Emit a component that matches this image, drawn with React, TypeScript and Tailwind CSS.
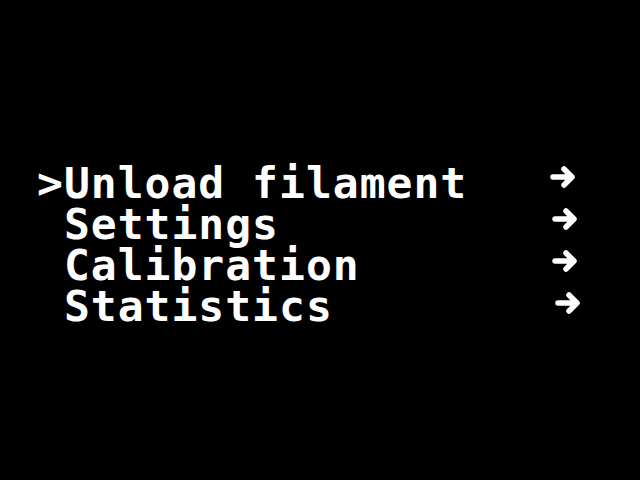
import React from 'react';

const rows = [
  { label: '>Unload filament', arrow: 'ml-[0px] mt-[1px]' },
  { label: ' Settings', arrow: 'ml-[2px] mt-[2px]' },
  { label: ' Calibration', arrow: 'ml-[2px] mt-[3px]' },
  { label: ' Statistics', arrow: 'ml-[5px] mt-[4px]' },
];

const Arrow: React.FC<{ className: string }> = ({ className }) => (
  <svg className={`w-[26px] h-[26px] shrink-0 ${className}`} viewBox="0 0 26 26" fill="none" stroke="white" strokeWidth={5.5} strokeLinecap="round" strokeLinejoin="round">
    <path d="M3 13H21M14 5L22 13L14 21" />
  </svg>
);

export default function App() {
  return (
    <div className="w-[640px] h-[480px] bg-black text-white overflow-hidden">
      <div className="pt-[163px] pl-[37px] font-['DejaVu_Sans_Mono',monospace] font-bold text-[43px] tracking-[1px] leading-[41px]">
        {rows.map((row) => (
          <div key={row.label} className="flex items-start h-[41px]">
            <span className="whitespace-pre w-[513px] shrink-0">{row.label}</span>
            <Arrow className={row.arrow} />
          </div>
        ))}
      </div>
    </div>
  );
}
